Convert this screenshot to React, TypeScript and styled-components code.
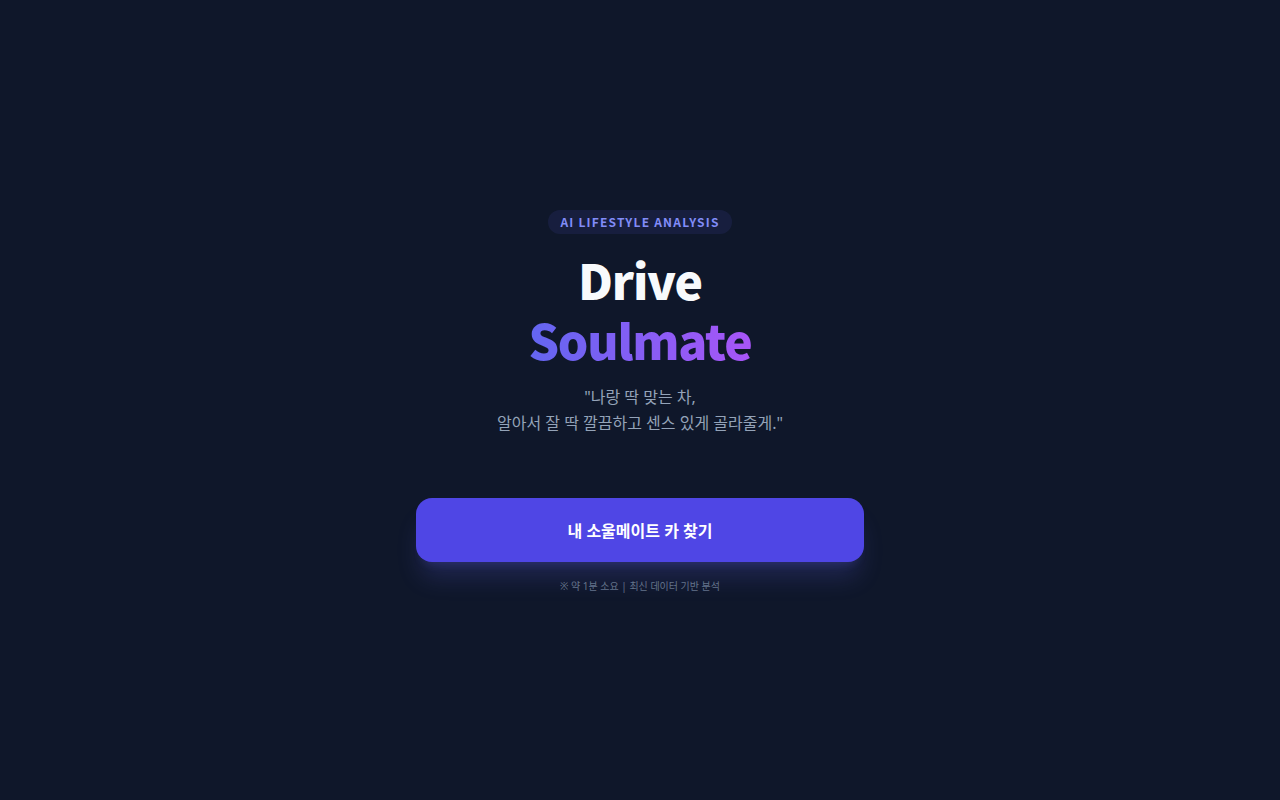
import React from "react";
import styled, { createGlobalStyle } from "styled-components";

const Global = createGlobalStyle`
  html, body { margin: 0; padding: 0; background: #0f172a; }
  body { font-family: "Noto Sans CJK KR", "Noto Sans", sans-serif; -webkit-font-smoothing: antialiased; }
  * { box-sizing: border-box; }
`;

const Page = styled.main`
  min-height: 100vh;
  display: flex;
  align-items: center;
  justify-content: center;
  padding-top: 4px;
  background: #0f172a;
`;

const Hero = styled.section`
  display: flex;
  flex-direction: column;
  align-items: center;
  text-align: center;
  width: 448px;
`;

const Badge = styled.span`
  display: inline-block;
  padding: 4px 12px;
  border-radius: 9999px;
  background: rgba(99, 102, 241, 0.1);
  color: #818cf8;
  font-size: 12px;
  line-height: 16px;
  font-weight: 700;
  letter-spacing: 0.1em;
  margin-bottom: 15px;
`;

const Title = styled.h1`
  margin: 0 0 15px;
  font-size: 48px;
  line-height: 60px;
  font-weight: 800;
  letter-spacing: -0.025em;
  color: #f8fafc;
  display: flex;
  flex-direction: column;
  align-items: center;
`;

const Gradient = styled.span`
  background: linear-gradient(to right, #6366f1, #a855f7);
  -webkit-background-clip: text;
  background-clip: text;
  color: transparent;
`;

const Quote = styled.p`
  margin: 0 0 62px;
  font-family: "Noto Sans", "Noto Sans CJK KR", sans-serif;
  font-size: 16px;
  line-height: 26px;
  color: #94a3b8;
`;

const CTA = styled.button`
  width: 448px;
  height: 64px;
  border: none;
  border-radius: 16px;
  background: #4f46e5;
  color: #ffffff;
  font-family: "Noto Sans", "Noto Sans CJK KR", sans-serif;
  font-size: 16px;
  font-weight: 700;
  cursor: pointer;
  box-shadow: 0 20px 25px -5px rgba(99, 102, 241, 0.2), 0 8px 10px -6px rgba(99, 102, 241, 0.2);
  margin-bottom: 16px;
`;

const Note = styled.p`
  margin: 0;
  font-family: "Noto Sans", "Noto Sans CJK KR", sans-serif;
  font-size: 10px;
  line-height: 16px;
  color: #64748b;
`;

export default function App() {
  return (
    <>
      <Global />
      <Page>
        <Hero>
          <Badge>AI LIFESTYLE ANALYSIS</Badge>
          <Title>
            <span>Drive</span>
            <Gradient>Soulmate</Gradient>
          </Title>
          <Quote>
            "나랑 딱 맞는 차,
            <br />
            알아서 잘 딱 깔끔하고 센스 있게 골라줄게."
          </Quote>
          <CTA>내 소울메이트 카 찾기</CTA>
          <Note>※ 약 1분 소요 | 최신 데이터 기반 분석</Note>
        </Hero>
      </Page>
    </>
  );
}
